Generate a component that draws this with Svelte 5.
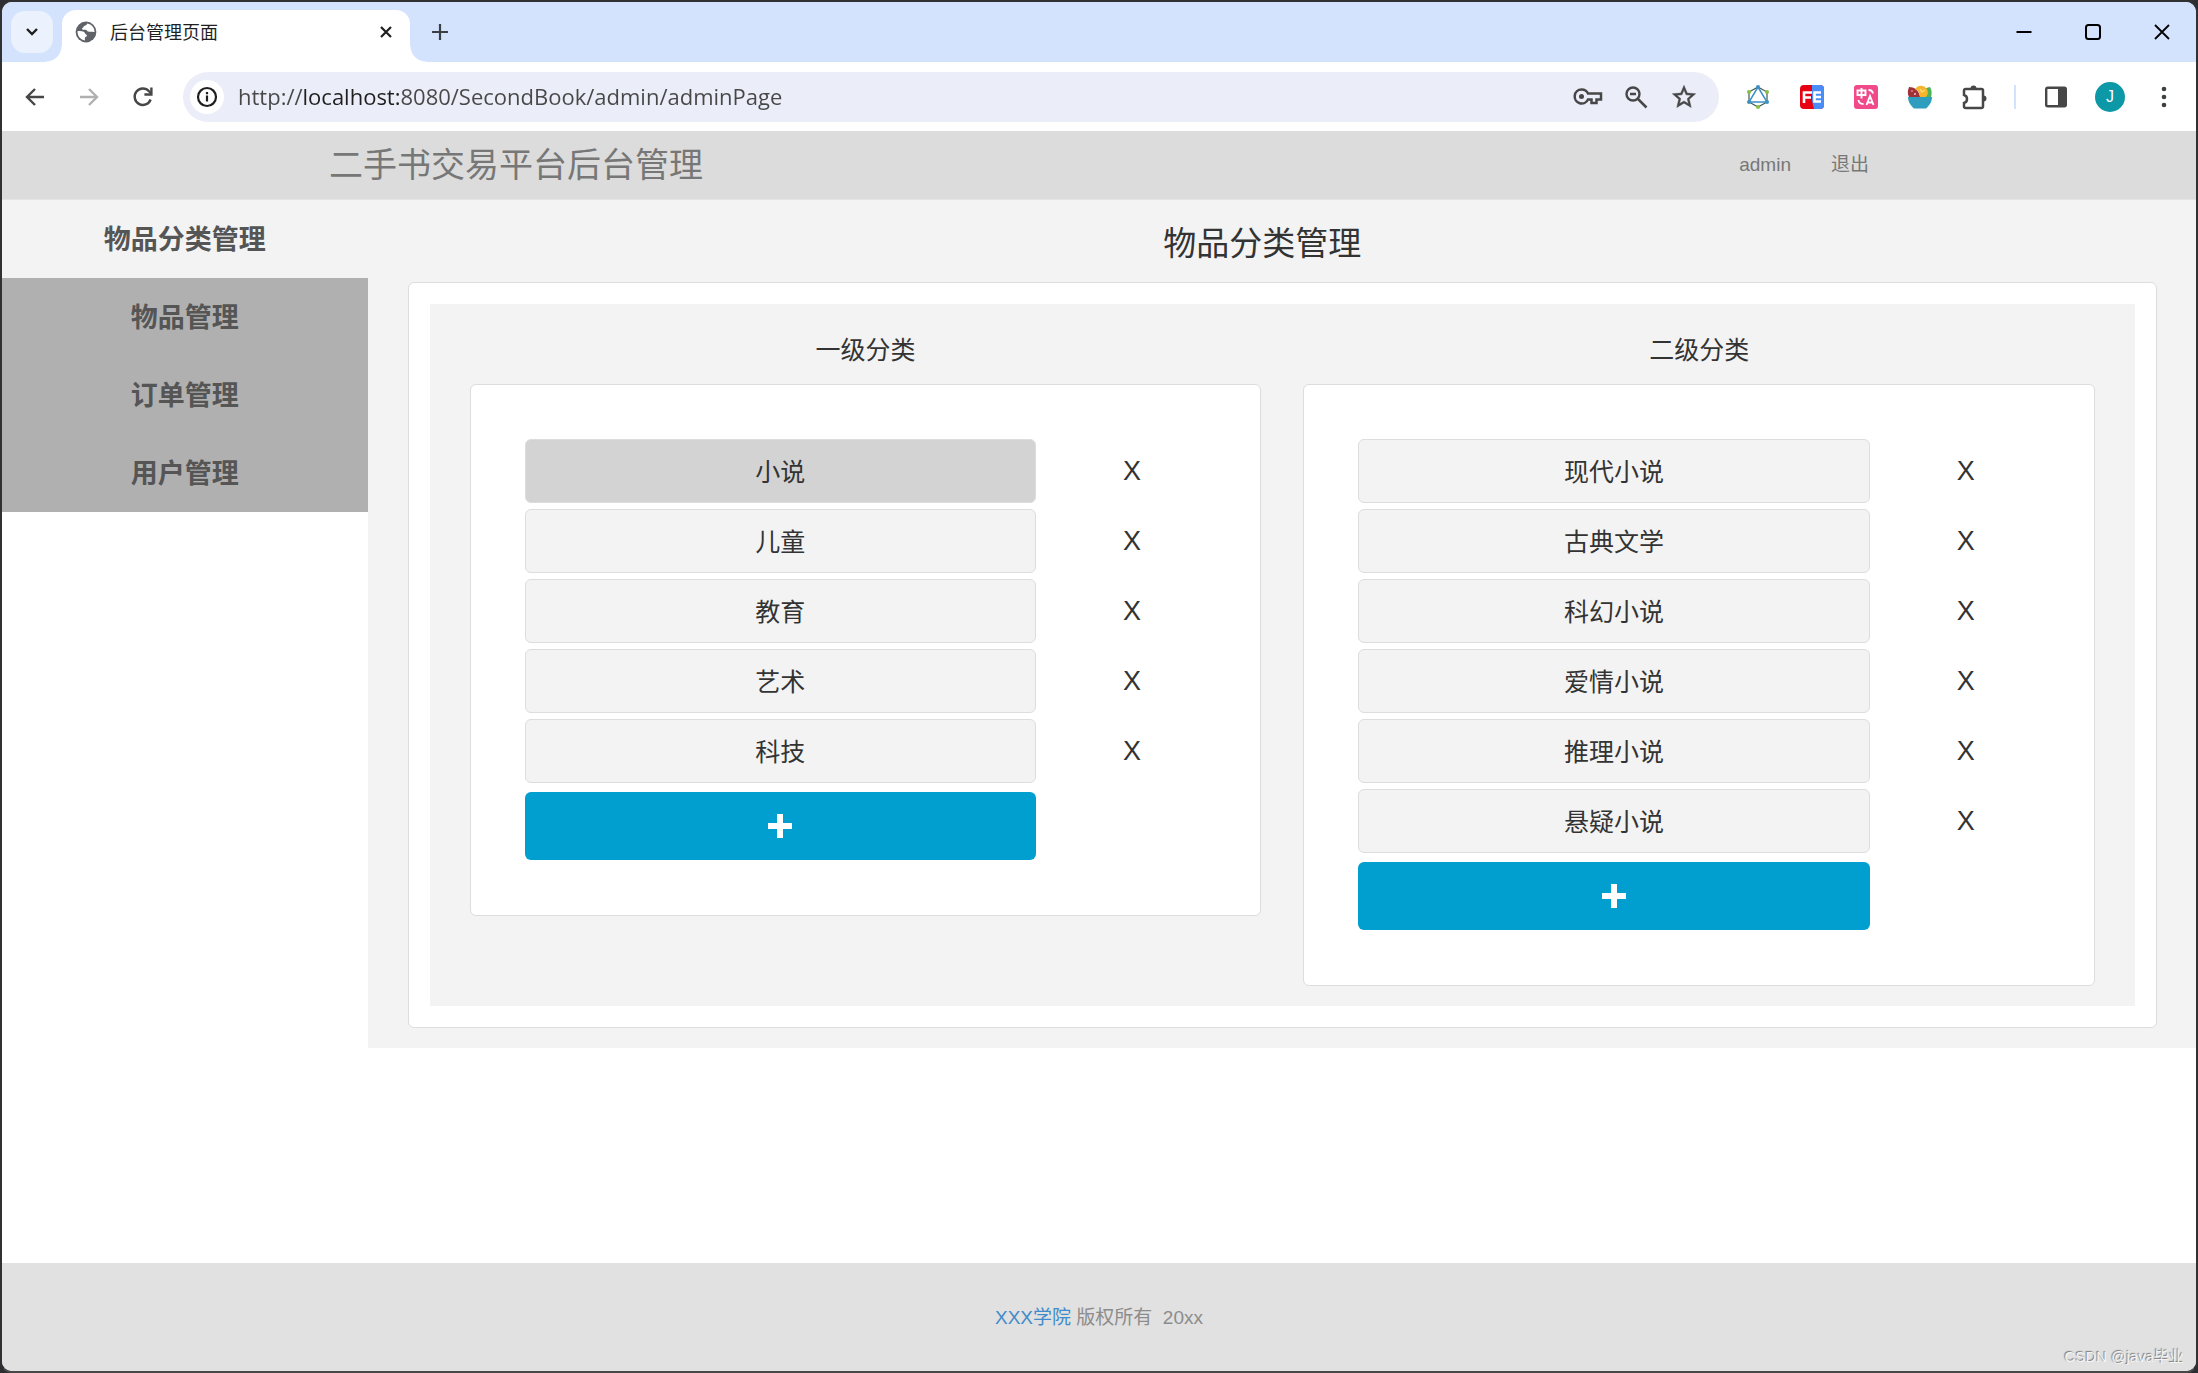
<script>
  const nav = ['物品分类管理', '物品管理', '订单管理', '用户管理'];
  let active = $state(0);
  let address = $state('http://localhost:8080/SecondBook/admin/adminPage');
  let columns = $state([
    { title: '一级分类', selected: 0, items: ['小说', '儿童', '教育', '艺术', '科技'] },
    { title: '二级分类', selected: -1, items: ['现代小说', '古典文学', '科幻小说', '爱情小说', '推理小说', '悬疑小说'] }
  ]);
</script>

<div class="window">
  <div class="tabstrip">
    <button class="tab-search" aria-label="搜索标签页">
      <svg width="14" height="10" viewBox="0 0 14 10"><path d="M2 2l5 5 5-5" fill="none" stroke="#1f1f1f" stroke-width="2.4" /></svg>
    </button>
    <div class="tab">
      <svg width="22" height="22" viewBox="0 0 22 22">
        <circle cx="11" cy="11" r="10.4" fill="#5f6368" />
        <path d="M12.3 2.6c-.4 1.500-1.600 1.900-3 2.300-.9.300-.6 1.400-1.500 1.800-.8.400-1 1.200-.3 1.700 1 .6 3.300-.3 4.400 1 .9 1.100 2.100 1.500 3.600 1.400 1.300 0 2.600.3 4 .2.200-4-2.800-7.600-7.200-8.400z" fill="#fff" />
        <path d="M2.500 10.200c2.100-.2 4.300-.3 6.200.6 1.500.7 1.200 2.200 2.400 2.700 1.300.5.8 2-.3 2.300-1.200.4-1 1.300-.8 3.600-4.300-.5-7.600-4.400-7.500-9.200z" fill="#fff" />
      </svg>
      <span class="tab-title">后台管理页面</span>
      <button class="tab-close" aria-label="关闭标签页">
        <svg width="14" height="14" viewBox="0 0 14 14"><path d="M2 2l10 10M12 2L2 12" stroke="#1f1f1f" stroke-width="2.200" /></svg>
      </button>
    </div>
    <button class="new-tab" aria-label="新标签页">
      <svg width="18" height="18" viewBox="0 0 18 18"><path d="M9 1v16M1 9h16" stroke="#3c4043" stroke-width="2.200" /></svg>
    </button>
    <div class="window-buttons">
      <button aria-label="最小化"><svg width="18" height="18" viewBox="0 0 18 18"><path d="M1.500 9h15" stroke="#000" stroke-width="2" /></svg></button>
      <button aria-label="最大化"><svg width="18" height="18" viewBox="0 0 18 18"><rect x="2" y="2" width="14" height="14" rx="2.500" fill="none" stroke="#000" stroke-width="2" /></svg></button>
      <button aria-label="关闭"><svg width="18" height="18" viewBox="0 0 18 18"><path d="M2 2l14 14M16 2L2 16" stroke="#000" stroke-width="1.800" /></svg></button>
    </div>
  </div>

  <div class="toolbar">
    <button class="tool" aria-label="后退">
      <svg width="20" height="20" viewBox="0 0 20 20"><path d="M19 10H3M10 2l-8 8 8 8" fill="none" stroke="#474747" stroke-width="2.400" /></svg>
    </button>
    <button class="tool" aria-label="前进">
      <svg width="20" height="20" viewBox="0 0 20 20"><path d="M1 10h16M10 2l8 8-8 8" fill="none" stroke="#b0b0b0" stroke-width="2.400" /></svg>
    </button>
    <button class="tool" aria-label="重新加载">
      <svg width="22" height="22" viewBox="0 0 22 22"><path d="M18.600 13.500a8.200 8.200 0 1 1-1.600-8.200l2.200 2.200" fill="none" stroke="#474747" stroke-width="2.400" /><path d="M19.400 1.500v7h-7" fill="none" stroke="#474747" stroke-width="2.400" /></svg>
    </button>
    <div class="omnibox">
      <button class="site-info" aria-label="查看网站信息">
        <svg width="22" height="22" viewBox="0 0 22 22"><circle cx="11" cy="11" r="9" fill="none" stroke="#1f1f1f" stroke-width="2.200" /><path d="M11 9.500v6M11 6v2.200" stroke="#1f1f1f" stroke-width="2.200" /></svg>
      </button>
      <input class="address" type="text" aria-label="地址栏" bind:value={address} />
      <button class="omni" aria-label="管理密码">
        <svg width="30" height="20" viewBox="0 0 30 20"><path d="M8.500 2.500a7 7 0 1 0 6.500 10h3.500v3.500h5v-3.500h4.500v-6H15a7 7 0 0 0-6.500-4z" fill="none" stroke="#474747" stroke-width="2.500" /><circle cx="8.500" cy="9.500" r="2.500" fill="#474747" /></svg>
      </button>
      <button class="omni" aria-label="缩放">
        <svg width="24" height="24" viewBox="0 0 24 24"><circle cx="9" cy="9" r="6.500" fill="none" stroke="#474747" stroke-width="2.400" /><path d="M6 9h6M14 14l8.500 8.500" stroke="#474747" stroke-width="2.500" /></svg>
      </button>
      <button class="omni" aria-label="为此标签页添加书签">
        <svg width="28" height="28" viewBox="0 0 24 24"><path d="M22 9.240l-7.190-.62L12 2 9.190 8.630 2 9.240l5.460 4.730L5.820 21 12 17.270 18.180 21l-1.630-7.030L22 9.240zM12 15.400l-3.760 2.270 1-4.280-3.320-2.880 4.380-.38L12 6.100l1.710 4.040 4.380.38-3.320 2.880 1 4.280L12 15.400z" fill="#474747" stroke="#474747" stroke-width=".4" /></svg>
      </button>
    </div>
    <button class="tool" aria-label="GraphQL">
      <svg width="24" height="26" viewBox="0 0 24 26">
        <path d="M12 3l9 5v10l-9 5-9-5V8z" fill="none" stroke="#3c5a55" stroke-width="1.200" />
        <path d="M12 3l9 15H3z" fill="none" stroke="#3d8fc6" stroke-width="1.500" />
        <g fill="#3d8fc6"><circle cx="12" cy="3" r="2" /><circle cx="3" cy="18" r="2" /><circle cx="21" cy="18" r="2" /></g>
        <g fill="#86bf45"><circle cx="3" cy="8" r="2" /><circle cx="21" cy="8" r="2" /><circle cx="12" cy="23" r="2" /></g>
      </svg>
    </button>
    <button class="tool" aria-label="FeHelper">
      <svg width="26" height="26" viewBox="0 0 26 26">
        <rect x="1" y="1" width="24" height="24" rx="4" fill="#e60012" />
        <path d="M13 1h8a4 4 0 0 1 4 4v16a4 4 0 0 1-4 4h-6l-2-8z" fill="#4a8df8" />
        <path d="M5 19V8.500h8M5 13.500h7M22 8.500h-6.500v9H22M15.500 13H22" fill="none" stroke="#fff" stroke-width="2.600" />
      </svg>
    </button>
    <button class="tool" aria-label="翻译">
      <svg width="26" height="26" viewBox="0 0 26 26">
        <rect x="1" y="1" width="24" height="24" rx="3" fill="#f04a8b" />
        <path d="M4.500 6.500h8v4.500h-8zM8.500 4v10.500M13.500 21l3.500-9 3.500 9M14.500 18.500h5M15.500 6c2.500 0 4 .7 4.500 3.500M5.500 16c.3 3 2 4 5 4" fill="none" stroke="#fff" stroke-width="1.900" />
      </svg>
    </button>
    <button class="tool" aria-label="沙拉查词">
      <svg width="26" height="26" viewBox="0 0 26 26">
        <path d="M2 3c5 0 10 3 11 10H2C0 9 1 6 2 3z" fill="#9f3138" />
        <path d="M23 3c2 3 2 7 1 10H14c1-5 3-9 9-10z" fill="#4db357" />
        <path d="M8 5c3-4.500 9-4.500 12 0 1.500 3 1 6-1 8h-6C13 9 11 6 8 5z" fill="#f7b32b" />
        <circle cx="5" cy="7" r="1" fill="#e87b7b" /><circle cx="8" cy="10" r="1" fill="#e9c4c4" /><path d="M13 5l2 3 3-2" fill="none" stroke="#ffd978" stroke-width="1.500" />
        <path d="M1 13h24c0 5-3 9-6 11.500H7C4 22 1 18 1 13z" fill="#2f9dbd" />
      </svg>
    </button>
    <button class="tool" aria-label="扩展程序">
      <svg width="28" height="28" viewBox="0 0 28 28">
        <path d="M4 10V7.500A1.500 1.500 0 0 1 5.500 6h16A1.500 1.500 0 0 1 23 7.500v16a1.500 1.500 0 0 1-1.500 1.500h-16A1.500 1.500 0 0 1 4 23.500V20c4-1 4-7 0-8z" fill="none" stroke="#474747" stroke-width="2.500" />
        <path d="M10.500 5.500a3 3 0 0 1 6 0zM23.500 12.500a3 3 0 0 1 0 6z" fill="#474747" />
      </svg>
    </button>
    <span class="divider"></span>
    <button class="tool" aria-label="侧边栏">
      <svg width="24" height="24" viewBox="0 0 24 24"><rect x="2.200" y="2.700" width="19.600" height="18.600" rx="1.500" fill="none" stroke="#474747" stroke-width="2.400" /><path d="M14 2h8v20h-8z" fill="#474747" /></svg>
    </button>
    <button class="tool" aria-label="个人资料"><span class="avatar">J</span></button>
    <button class="tool" aria-label="菜单">
      <svg width="6" height="22" viewBox="0 0 6 22" fill="#3c4043"><circle cx="3" cy="3" r="2.300" /><circle cx="3" cy="11" r="2.300" /><circle cx="3" cy="19" r="2.300" /></svg>
    </button>
  </div>

  <header>
    <div class="container">
      <h1>二手书交易平台后台管理</h1>
      <nav class="account">
        <a href="#admin">admin</a>
        <a href="#logout">退出</a>
      </nav>
    </div>
  </header>

  <div class="page">
    <nav class="side">
      {#each nav as label, i}
        <a href="#nav-{i}" class:active={active === i} onclick={() => (active = i)}>{label}</a>
      {/each}
    </nav>
    <main>
      <h2>物品分类管理</h2>
      <section class="panel">
        <div class="columns">
          {#each columns as column}
            <div class="column">
              <h3>{column.title}</h3>
              <div class="card">
                {#each column.items as item, i}
                  <div class="row">
                    <button class="item" class:selected={column.selected === i} onclick={() => (column.selected = i)}>{item}</button>
                    <button class="remove" aria-label="删除{item}" onclick={() => column.items.splice(i, 1)}>X</button>
                  </div>
                {/each}
                <div class="row last">
                  <button class="add" aria-label="添加" onclick={() => column.items.push('')}>
                    <svg width="26" height="26" viewBox="0 0 26 26"><path d="M10 1h6v9h9v6h-9v9h-6v-9H1v-6h9z" fill="#fff" /></svg>
                  </button>
                </div>
              </div>
            </div>
          {/each}
        </div>
      </section>
    </main>
  </div>

  <footer>
    <p><a href="#college">XXX学院</a> 版权所有&nbsp; 20xx</p>
  </footer>
  <span class="watermark">CSDN @java毕业</span>
</div>

<style>
  :global(body) {
    background: #2c2e31;
  }
  .window,
  .window * {
    box-sizing: border-box;
  }
  .window {
    position: relative;
    display: flex;
    flex-direction: column;
    min-height: 100vh;
    border: 2px solid #2f3133;
    border-bottom-color: #484848;
    border-radius: 12px;
    overflow: hidden;
    background: #fff;
    color: #333;
    font-family: 'Liberation Sans', 'Noto Sans CJK SC', sans-serif;
    font-size: 19px;
  }
  button {
    display: flex;
    align-items: center;
    justify-content: center;
    padding: 0;
    border: 0;
    background: none;
    color: inherit;
    font: inherit;
  }
  a {
    text-decoration: none;
  }
  h1,
  h2,
  h3,
  p {
    margin: 0;
    font-weight: 400;
  }

  .tabstrip {
    display: flex;
    align-items: center;
    height: 60px;
    padding-left: 9px;
    background: #d3e2fd;
  }
  .tab-search {
    width: 42px;
    height: 42px;
    border-radius: 14px;
    background: #ecf2fd;
  }
  .tab {
    position: relative;
    display: flex;
    align-items: center;
    align-self: flex-end;
    width: 348px;
    height: 52px;
    margin-left: 9px;
    padding: 0 12px 8px 13px;
    border-radius: 14px 14px 0 0;
    background: #fff;
  }
  .tab::before,
  .tab::after {
    content: '';
    position: absolute;
    bottom: 0;
    width: 16px;
    height: 16px;
  }
  .tab::before {
    right: 100%;
    background: radial-gradient(circle at 0 0, transparent 15px, #fff 16px);
  }
  .tab::after {
    left: 100%;
    background: radial-gradient(circle at 100% 0, transparent 15px, #fff 16px);
  }
  .tab-title {
    flex: 1;
    margin-left: 13px;
    padding-top: 2px;
    color: #1f1f1f;
    font-size: 18px;
    line-height: 24px;
  }
  .tab-close {
    width: 24px;
    height: 24px;
  }
  .new-tab {
    width: 36px;
    height: 36px;
    margin-left: 12px;
  }
  .window-buttons {
    display: flex;
    margin-left: auto;
  }
  .window-buttons button {
    width: 69px;
    height: 58px;
  }

  .toolbar {
    display: flex;
    align-items: center;
    height: 69px;
    padding: 0 5px 0 6px;
    background: #fff;
  }
  .tool {
    flex: none;
    width: 54px;
    height: 50px;
  }
  .omnibox {
    display: flex;
    flex: 1;
    align-items: center;
    height: 50px;
    margin: 0 12px 0 13px;
    padding: 0 11px 0 7px;
    border-radius: 25px;
    background: #ebeef8;
  }
  .site-info {
    width: 34px;
    height: 34px;
    border-radius: 50%;
    background: #fff;
  }
  .address {
    flex: 1;
    min-width: 0;
    height: 40px;
    margin-left: 14px;
    padding: 0 0 2px;
    border: 0;
    outline: 0;
    background: linear-gradient(90deg, #474747 66px, #1f1f1f 66px, #1f1f1f 161px, #474747 161px);
    background-clip: text;
    -webkit-text-fill-color: transparent;
    font-family: 'Open Sans', 'Noto Sans', sans-serif;
    font-size: 22px;
  }
  .omni {
    width: 48px;
    height: 40px;
  }
  .divider {
    width: 2px;
    height: 24px;
    margin: 0 13px;
    background: #d3e2fd;
  }
  .avatar {
    width: 30px;
    height: 30px;
    border-radius: 50%;
    background: #0c98a6;
    color: #fff;
    font-size: 16px;
    line-height: 30px;
    text-align: center;
  }

  header {
    border-bottom: 1px solid #e4e4e4;
    background: #dcdcdc;
  }
  .container {
    display: flex;
    align-items: center;
    justify-content: space-between;
    max-width: 1580px;
    height: 68px;
    padding: 0 0 0 20px;
    margin: 0 auto;
  }
  h1 {
    color: #777;
    font-size: 34px;
    line-height: 48px;
  }
  .account {
    display: flex;
  }
  .account a {
    padding: 0 20px;
    color: #777;
    line-height: 26px;
  }

  .page {
    display: flex;
    flex: 1;
    align-items: flex-start;
  }
  .side {
    display: flex;
    flex-direction: column;
    width: calc(100% / 6);
    background: #b0b0b0;
  }
  .side a {
    padding: 21px 0 18px;
    color: #555;
    font-size: 27px;
    font-weight: 700;
    line-height: 39px;
    text-align: center;
  }
  .side a.active {
    background: #f3f3f3;
  }
  main {
    flex: 1;
    padding: 20px 39px 20px 40px;
    background: #f3f3f3;
  }
  h2 {
    padding: 0 40px 14px 0;
    font-size: 33px;
    line-height: 48px;
    text-align: center;
  }
  .panel {
    padding: 21px;
    border: 1px solid #ddd;
    border-radius: 6px;
    background: #fff;
  }
  .columns {
    display: flex;
    align-items: flex-start;
    gap: 42px;
    padding: 27px 40px 20px;
    background: #f3f3f3;
  }
  .column {
    flex: 1;
  }
  h3 {
    padding-bottom: 15px;
    font-size: 25px;
    line-height: 38px;
    text-align: center;
  }
  .card {
    padding: 54px 54px 55px;
    border: 1px solid #ddd;
    border-radius: 6px;
    background: #fff;
  }
  .row {
    display: grid;
    grid-template-columns: 3fr 1fr;
    margin-bottom: 6px;
  }
  .row.last {
    margin: 9px 0 0;
  }
  .item {
    height: 64px;
    padding-bottom: 2px;
    border: 1px solid #ddd;
    border-radius: 6px;
    background: #f3f3f3;
    font-size: 25px;
  }
  .item.selected {
    background: #d3d3d3;
  }
  .remove {
    padding: 1px 0 0 22px;
    font-size: 27px;
  }
  .add {
    height: 68px;
    border-radius: 6px;
    background: #009fd0;
  }

  footer {
    padding: 41px 0 39px;
    background: #e1e1e1;
    color: #8c8c8c;
    line-height: 28px;
    text-align: center;
  }
  footer a {
    color: #428bca;
  }
  .watermark {
    position: absolute;
    right: 12px;
    bottom: 4px;
    color: #f4f4f4;
    font-size: 15px;
    line-height: 20px;
    text-shadow: -1px -1px 1px #777;
  }
</style>
